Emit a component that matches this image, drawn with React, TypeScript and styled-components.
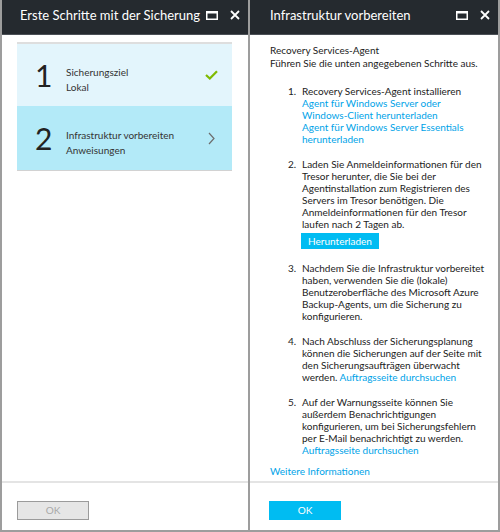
import React from "react";
import styled, { createGlobalStyle } from "styled-components";

const GlobalStyle = createGlobalStyle`
  html, body { margin: 0; padding: 0; background: #ffffff; }
  body { font-family: "Lato", "Liberation Sans", sans-serif; }
  * { box-sizing: border-box; }
`;

const Frame = styled.div`
  width: 500px;
  height: 532px;
  display: grid;
  grid-template-columns: 246px 248px;
  column-gap: 2px;
  padding: 0 2px 2px 2px;
  background: #9d9d9d;
`;

const Panel = styled.section`
  display: flex;
  flex-direction: column;
  background: #ffffff;
  min-height: 0;
`;

const Header = styled.header<{ $pad: number }>`
  height: 35px;
  flex: none;
  display: flex;
  align-items: center;
  padding: 0 0 4px ${(p) => p.$pad}px;
  background: #252a2f;
  border-bottom: 1px solid #4b5056;
`;

const Title = styled.h1`
  flex: 1;
  margin: 0;
  font-size: 13px;
  font-weight: 400;
  color: #ffffff;
  white-space: nowrap;
`;

const HeaderIcons = styled.div`
  display: flex;
  align-items: center;
  gap: 12px;
  padding-right: 8px;
`;

const Body = styled.div<{ $pad: string }>`
  flex: 1;
  padding: ${(p) => p.$pad};
  min-height: 0;
`;

const Footer = styled.footer<{ $left: number }>`
  flex: none;
  height: 49px;
  border-top: 2px solid #e4e4e4;
  padding: 15px 0 0 ${(p) => p.$left}px;
`;

const Button = styled.button<{ $disabled?: boolean }>`
  width: 72px;
  height: 19px;
  padding: 0;
  font-family: inherit;
  font-size: 10px;
  border: 1px solid ${(p) => (p.$disabled ? "#9b9b9b" : "#00bcf2")};
  background: ${(p) => (p.$disabled ? "#e6e6e6" : "#00bcf2")};
  color: ${(p) => (p.$disabled ? "#a8a8a8" : "#ffffff")};
`;

const Steps = styled.div`
  border-top: 2px solid #dedede;
  border-bottom: 1px solid #d2d2d2;
`;

const Step = styled.div<{ $active?: boolean }>`
  height: ${(p) => (p.$active ? 64 : 62)}px;
  display: flex;
  align-items: center;
  padding: 0 13px 0 18px;
  background: ${(p) => (p.$active ? "#b3eaf8" : "#e3f5fc")};
`;

const StepNumber = styled.div`
  width: 31px;
  font-size: 30px;
  line-height: 30px;
  color: #222222;
  font-weight: 400;
`;

const StepText = styled.div`
  flex: 1;
  margin-top: 9px;
  font-size: 10px;
  line-height: 15px;
  color: #333333;
`;

const StepIcon = styled.div<{ $inset: number }>`
  display: flex;
  margin-right: ${(p) => p.$inset}px;
`;

const Intro = styled.div`
  font-size: 10px;
  line-height: 13px;
  color: #222222;
  white-space: nowrap;
`;

const List = styled.ol`
  list-style: none;
  margin: 15px 0 0 0;
  padding: 0 0 0 18px;
  display: flex;
  flex-direction: column;
  gap: 13px;
`;

const Item = styled.li`
  display: flex;
  font-size: 10px;
  line-height: 12px;
  color: #222222;
`;

const ItemNumber = styled.span`
  width: 14px;
  flex: none;
`;

const ItemBody = styled.div`
  white-space: nowrap;
`;

const Link = styled.a`
  color: #00a3e8;
  text-decoration: none;
`;

const SmallButton = styled.button`
  display: block;
  margin: 3px 0 0 -1px;
  width: 78px;
  height: 16px;
  padding: 0;
  border: none;
  background: #00bcf2;
  color: #ffffff;
  font-family: inherit;
  font-size: 10px;
`;

const More = styled.div`
  margin-top: 9px;
  font-size: 10px;
  line-height: 12px;
`;

const MaxIcon = () => (
  <svg width="12" height="9" viewBox="0 0 12 9">
    <rect x="0.75" y="1" width="10.5" height="7.25" fill="none" stroke="#fff" strokeWidth="1.5" />
    <rect x="0" y="0" width="12" height="2.5" fill="#fff" />
  </svg>
);

const CloseIcon = () => (
  <svg width="10" height="10" viewBox="0 0 10 10">
    <path d="M1 1 L9 9 M9 1 L1 9" stroke="#fff" strokeWidth="1.8" />
  </svg>
);

const Check = () => (
  <svg width="13" height="10" viewBox="0 0 13 10">
    <path d="M1 5 L4.8 8.5 L12 1.2" fill="none" stroke="#7fba00" strokeWidth="2.2" />
  </svg>
);

const Chevron = () => (
  <svg width="7" height="13" viewBox="0 0 7 13">
    <path d="M1 1 L6 6.5 L1 12" fill="none" stroke="#6d6d6d" strokeWidth="1.2" />
  </svg>
);

export default function App() {
  return (
    <>
      <GlobalStyle />
      <Frame>
        <Panel>
          <Header $pad={18}>
            <Title>Erste Schritte mit der Sicherung</Title>
            <HeaderIcons>
              <MaxIcon />
              <CloseIcon />
            </HeaderIcons>
          </Header>
          <Body $pad="7px 16px 0 15px">
            <Steps>
              <Step>
                <StepNumber>1</StepNumber>
                <StepText>
                  Sicherungsziel
                  <br />
                  Lokal
                </StepText>
                <StepIcon $inset={1}>
                  <Check />
                </StepIcon>
              </Step>
              <Step $active>
                <StepNumber>2</StepNumber>
                <StepText>
                  Infrastruktur vorbereiten
                  <br />
                  Anweisungen
                </StepText>
                <StepIcon $inset={4}>
                  <Chevron />
                </StepIcon>
              </Step>
            </Steps>
          </Body>
          <Footer $left={15}>
            <Button $disabled>OK</Button>
          </Footer>
        </Panel>
        <Panel>
          <Header $pad={20}>
            <Title>Infrastruktur vorbereiten</Title>
            <HeaderIcons>
              <MaxIcon />
              <CloseIcon />
            </HeaderIcons>
          </Header>
          <Body $pad="9px 10px 0 20px">
            <Intro>
              Recovery Services-Agent
              <br />
              Führen Sie die unten angegebenen Schritte aus.
            </Intro>
            <List>
              <Item>
                <ItemNumber>1.</ItemNumber>
                <ItemBody>
                  Recovery Services-Agent installieren
                  <br />
                  <Link>
                    Agent für Windows Server oder
                    <br />
                    Windows-Client herunterladen
                  </Link>
                  <br />
                  <Link>
                    Agent für Windows Server Essentials
                    <br />
                    herunterladen
                  </Link>
                </ItemBody>
              </Item>
              <Item>
                <ItemNumber>2.</ItemNumber>
                <ItemBody>
                  Laden Sie Anmeldeinformationen für den
                  <br />
                  Tresor herunter, die Sie bei der
                  <br />
                  Agentinstallation zum Registrieren des
                  <br />
                  Servers im Tresor benötigen. Die
                  <br />
                  Anmeldeinformationen für den Tresor
                  <br />
                  laufen nach 2 Tagen ab.
                  <SmallButton>Herunterladen</SmallButton>
                </ItemBody>
              </Item>
              <Item>
                <ItemNumber>3.</ItemNumber>
                <ItemBody>
                  Nachdem Sie die Infrastruktur vorbereitet
                  <br />
                  haben, verwenden Sie die (lokale)
                  <br />
                  Benutzeroberfläche des Microsoft Azure
                  <br />
                  Backup-Agents, um die Sicherung zu
                  <br />
                  konfigurieren.
                </ItemBody>
              </Item>
              <Item>
                <ItemNumber>4.</ItemNumber>
                <ItemBody>
                  Nach Abschluss der Sicherungsplanung
                  <br />
                  können die Sicherungen auf der Seite mit
                  <br />
                  den Sicherungsaufträgen überwacht
                  <br />
                  werden. <Link>Auftragsseite durchsuchen</Link>
                </ItemBody>
              </Item>
              <Item>
                <ItemNumber>5.</ItemNumber>
                <ItemBody>
                  Auf der Warnungsseite können Sie
                  <br />
                  außerdem Benachrichtigungen
                  <br />
                  konfigurieren, um bei Sicherungsfehlern
                  <br />
                  per E-Mail benachrichtigt zu werden.
                  <br />
                  <Link>Auftragsseite durchsuchen</Link>
                </ItemBody>
              </Item>
            </List>
            <More>
              <Link>Weitere Informationen</Link>
            </More>
          </Body>
          <Footer $left={19}>
            <Button>OK</Button>
          </Footer>
        </Panel>
      </Frame>
    </>
  );
}
